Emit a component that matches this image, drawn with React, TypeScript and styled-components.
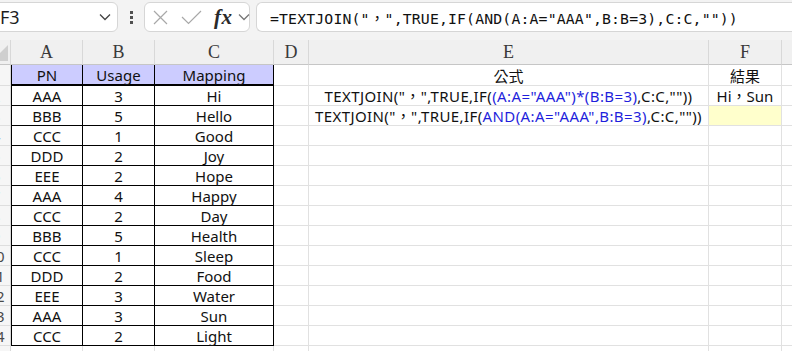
import React from 'react';
import styled, { createGlobalStyle } from 'styled-components';

const GlobalStyle = createGlobalStyle`
  html, body { margin: 0; padding: 0; background: #fff; overflow: hidden; }
  #root { width: 792px; height: 351px; overflow: hidden; }
`;

const Frame = styled.div`
  margin-left: -18px;
  width: 840px;
  display: flex;
  flex-direction: column;
`;

const Toolbar = styled.div`
  height: 40px;
  box-sizing: border-box;
  background: #f3f3f3;
  display: flex;
  align-items: flex-start;
  padding: 2px 0 0 4px;
`;

const Box = styled.div`
  box-sizing: border-box;
  height: 30px;
  background: #fff;
  border: 1px solid #d6d6d6;
  border-radius: 6px;
  display: flex;
  align-items: center;
  flex: none;
`;

const NameBox = styled(Box)`
  width: 132px;
  padding: 0 6px 0 13px;
  justify-content: space-between;
  font-family: "Noto Sans", sans-serif;
  font-size: 18px;
  color: #1e1e1e;
`;

const Dots = styled.div`
  width: 26px;
  height: 30px;
  flex: none;
  display: flex;
  flex-direction: column;
  align-items: center;
  justify-content: center;
  gap: 2px;
`;

const Dot = styled.span`
  width: 3px;
  height: 3px;
  background: #505050;
`;

const FuncBox = styled(Box)`
  width: 106px;
  padding-left: 8px;
  gap: 0;
`;

const IconSlot = styled.span<{ $w: number; $ml?: number }>`
  width: ${(p) => p.$w}px;
  margin-left: ${(p) => p.$ml ?? 0}px;
  display: flex;
  align-items: center;
  justify-content: center;
`;

const Fx = styled.span`
  font-family: "Liberation Serif", "DejaVu Serif", serif;
  font-style: italic;
  font-weight: bold;
  font-size: 21px;
  color: #2a2a2a;
  margin-left: 12px;
  line-height: 1;
  letter-spacing: 0.5px;
`;

const FormulaBox = styled(Box)`
  width: 600px;
  margin-left: 6px;
  padding-left: 13px;
  font-family: "DejaVu Sans Mono", "Noto Sans CJK TC", monospace;
  font-size: 14.8px;
  letter-spacing: 0.15px;
  color: #111;
  white-space: pre;
  border-right: none;
  border-radius: 6px 0 0 6px;
`;

const Sheet = styled.div`
  display: grid;
  grid-template-columns: 29px 72px 72px 119px 35px 400px 73px 80px;
  grid-template-rows: 25px 21px repeat(14, 20px);
`;

const ColHead = styled.div`
  box-sizing: border-box;
  background: #f0f0f0;
  border-right: 1px solid #d8d8d8;
  border-bottom: 1px solid #c6c6c6;
  display: flex;
  align-items: center;
  justify-content: center;
  font-family: "Liberation Serif", "DejaVu Serif", serif;
  font-size: 18px;
  color: #3a3a3a;
  padding-top: 1px;
`;

const Corner = styled(ColHead)`
  position: relative;
  &::after {
    content: '';
    position: absolute;
    right: 2px;
    bottom: 3px;
    width: 0;
    height: 0;
    border-left: 16px solid transparent;
    border-bottom: 16px solid #cfcfcf;
  }
`;

const RowHead = styled.div`
  box-sizing: border-box;
  background: #f6f6f6;
  border-right: 1px solid #d8d8d8;
  border-bottom: 1px solid #dedede;
  display: flex;
  align-items: center;
  justify-content: center;
  font-family: "Noto Sans", sans-serif;
  font-size: 15px;
  color: #4a4a4a;
`;

const Cell = styled.div<{
  $boxed?: boolean;
  $first?: boolean;
  $thick?: boolean;
  $bg?: string;
}>`
  box-sizing: border-box;
  background: ${(p) => p.$bg ?? '#fff'};
  border-right: 1px solid ${(p) => (p.$boxed ? '#000' : '#e1e1e1')};
  border-bottom: ${(p) => (p.$thick ? 2 : 1)}px solid ${(p) => (p.$boxed ? '#000' : '#e1e1e1')};
  border-left: ${(p) => (p.$first ? '1px solid #000' : 'none')};
  display: flex;
  align-items: center;
  justify-content: center;
  font-family: "Noto Sans", "Noto Sans CJK TC", sans-serif;
  font-size: 15px;
  color: #111;
  white-space: nowrap;
`;

const FormulaText = styled.span`
  letter-spacing: 0.4px;
`;

const Ref = styled.span`
  color: #1f1fdc;
`;

const Chevron = ({ color = '#444' }: { color?: string }) => (
  <svg width="12" height="8" viewBox="0 0 12 8">
    <path d="M1 1.5 L6 6.5 L11 1.5" fill="none" stroke={color} strokeWidth="1.3" />
  </svg>
);

const table: string[][] = [
  ['PN', 'Usage', 'Mapping'],
  ['AAA', '3', 'Hi'],
  ['BBB', '5', 'Hello'],
  ['CCC', '1', 'Good'],
  ['DDD', '2', 'Joy'],
  ['EEE', '2', 'Hope'],
  ['AAA', '4', 'Happy'],
  ['CCC', '2', 'Day'],
  ['BBB', '5', 'Health'],
  ['CCC', '1', 'Sleep'],
  ['DDD', '2', 'Food'],
  ['EEE', '3', 'Water'],
  ['AAA', '3', 'Sun'],
  ['CCC', '2', 'Light'],
];

const formula1 = (
  <FormulaText>
    TEXTJOIN("，",TRUE,IF(<Ref>(A:A="AAA")*(B:B=3)</Ref>,C:C,""))
  </FormulaText>
);
const formula2 = (
  <FormulaText>
    TEXTJOIN("，",TRUE,IF(<Ref>AND(A:A="AAA",B:B=3)</Ref>,C:C,""))
  </FormulaText>
);

const eCol: React.ReactNode[] = ['公式', formula1, formula2];
const fCol: React.ReactNode[] = ['結果', 'Hi，Sun', ''];

export default function App() {
  const rows = [];
  for (let r = 0; r < 15; r++) {
    const inTable = r < table.length;
    const data = inTable ? table[r] : ['', '', ''];
    const thick = r === 0;
    rows.push(
      <React.Fragment key={r}>
        <RowHead>{r + 1}</RowHead>
        {data.map((v, i) => (
          <Cell
            key={i}
            $boxed={inTable}
            $first={inTable && i === 0}
            $thick={thick && inTable}
            $bg={r === 0 ? '#ccccff' : undefined}
          >
            {v}
          </Cell>
        ))}
        <Cell />
        <Cell>{eCol[r] ?? ''}</Cell>
        <Cell $bg={r === 2 ? '#ffffcc' : undefined}>{fCol[r] ?? ''}</Cell>
        <Cell />
      </React.Fragment>
    );
  }

  return (
    <>
      <GlobalStyle />
      <Frame>
        <Toolbar>
          <NameBox>
            <span>F3</span>
            <Chevron />
          </NameBox>
          <Dots>
            <Dot />
            <Dot />
            <Dot />
          </Dots>
          <FuncBox>
            <IconSlot $w={15}>
              <svg width="15" height="15" viewBox="0 0 15 15">
                <path d="M1 1 L14 14 M14 1 L1 14" stroke="#a8a8a8" strokeWidth="1.2" fill="none" />
              </svg>
            </IconSlot>
            <IconSlot $w={21} $ml={13}>
              <svg width="21" height="15" viewBox="0 0 21 15">
                <path d="M1 7 L7.5 13.5 L20 1" stroke="#a8a8a8" strokeWidth="1.2" fill="none" />
              </svg>
            </IconSlot>
            <Fx>fx</Fx>
            <IconSlot $w={12} $ml={5}>
              <Chevron color="#777" />
            </IconSlot>
          </FuncBox>
          <FormulaBox>=TEXTJOIN("，",TRUE,IF(AND(A:A="AAA",B:B=3),C:C,""))</FormulaBox>
        </Toolbar>
        <Sheet>
          <Corner />
          {['A', 'B', 'C', 'D', 'E', 'F', 'G'].map((c) => (
            <ColHead key={c}>{c === 'G' ? '' : c}</ColHead>
          ))}
          {rows}
        </Sheet>
      </Frame>
    </>
  );
}
